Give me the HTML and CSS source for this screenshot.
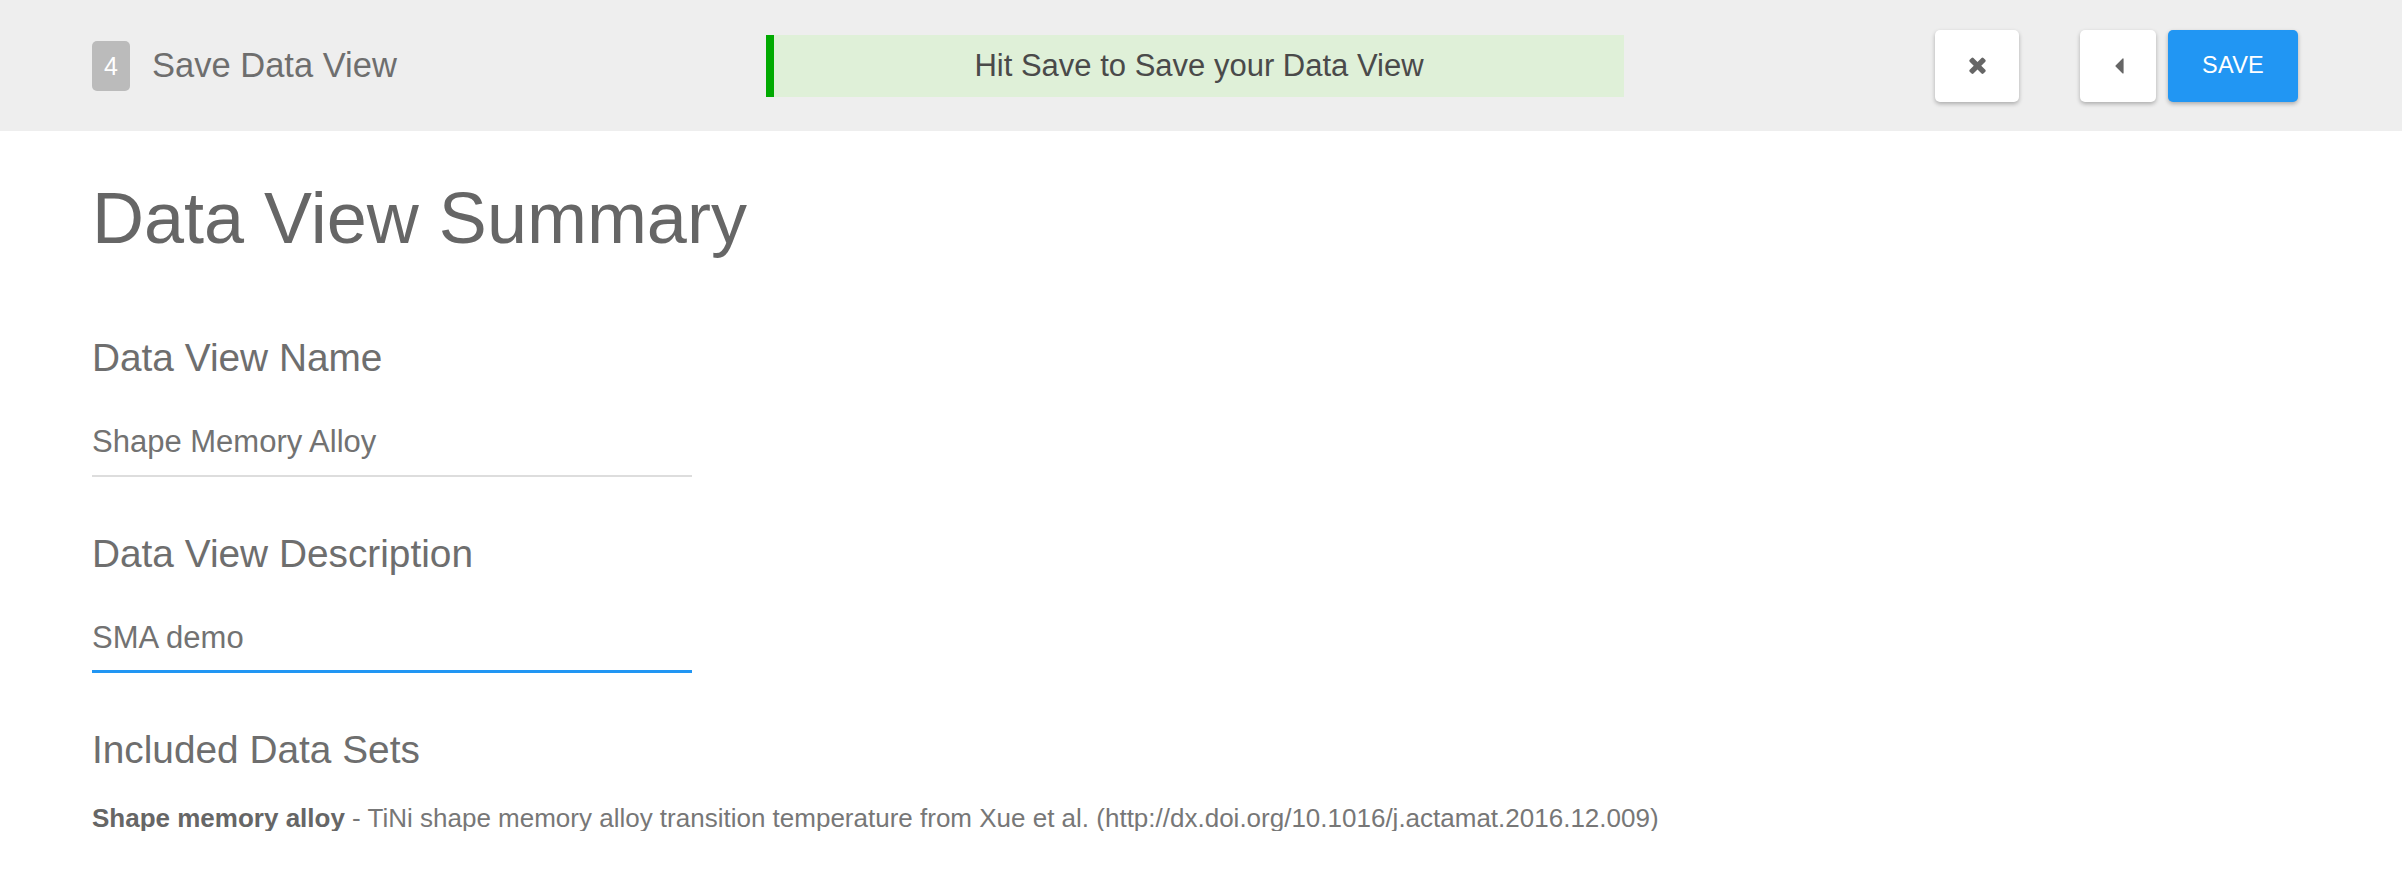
FILE: index.html
```html
<!DOCTYPE html>
<html lang="en">
<head>
<meta charset="utf-8">
<title>Save Data View</title>
<link rel="stylesheet" href="styles.css">
</head>
<body>
<header class="topbar">
  <div class="step">
    <span class="step-badge">4</span>
    <span class="step-title">Save Data View</span>
  </div>
  <div class="alert">Hit Save to Save your Data View</div>
  <div class="spacer"></div>
  <button class="btn btn-close" type="button" aria-label="Close">
    <svg class="icon-times" viewBox="302 322 1188 1232" width="17" height="17" aria-hidden="true"><path d="M1490 1322q0 40-28 68l-136 136q-28 28-68 28t-68-28l-294-294-294 294q-28 28-68 28t-68-28l-136-136q-28-28-28-68t28-68l294-294-294-294q-28-28-28-68t28-68l136-136q28-28 68-28t68 28l294 294 294-294q28-28 68-28t68 28l136 136q28 28 28 68t-28 68l-294 294 294 294q28 28 28 68z"/></svg>
  </button>
  <div class="btn-group">
    <button class="btn btn-back" type="button" aria-label="Back">
      <svg class="icon-caret" viewBox="0 0 9 16" width="9" height="16" aria-hidden="true"><polygon points="8,1 8,15 1,8"/></svg>
    </button>
    <button class="btn btn-save" type="button">SAVE</button>
  </div>
</header>

<main class="summary">
  <h1 class="summary-title">Data View Summary</h1>

  <section class="field">
    <h2 class="field-label">Data View Name</h2>
    <div class="field-input">Shape Memory Alloy</div>
  </section>

  <section class="field">
    <h2 class="field-label">Data View Description</h2>
    <div class="field-input field-input--focused">SMA demo</div>
  </section>

  <section class="field">
    <h2 class="field-label">Included Data Sets</h2>
    <p class="dataset"><strong>Shape memory alloy</strong> - TiNi shape memory alloy transition temperature from Xue et al. (http://dx.doi.org/10.1016/j.actamat.2016.12.009)</p>
  </section>
</main>
</body>
</html>
```

FILE: styles.css
```css
* {
  box-sizing: border-box;
}

html, body {
  margin: 0;
  padding: 0;
  background: #ffffff;
}

body {
  font-family: "Liberation Sans", Arial, Helvetica, sans-serif;
  color: #666666;
  overflow: hidden;
}

/* ---------- Top bar ---------- */
.topbar {
  height: 131px;
  background: #eeeeee;
  display: flex;
  align-items: center;
  padding: 0 104px 0 92px;
}

.step {
  flex: 0 0 674px;
  display: flex;
  align-items: center;
}

.step-badge {
  width: 38px;
  height: 50px;
  border-radius: 5px;
  background: #bbbbbb;
  color: #ffffff;
  font-size: 25px;
  line-height: 50px;
  text-align: center;
}

.step-title {
  margin-left: 22px;
  font-size: 34.5px;
  line-height: 1;
  color: #6e6e6e;
}

.alert {
  flex: 0 0 858px;
  height: 62px;
  background: #dff0d8;
  border-left: 8px solid #00aa00;
  color: #4a4a4a;
  font-size: 31px;
  line-height: 62px;
  text-align: center;
}

.spacer {
  flex: 1 1 auto;
}

.btn {
  height: 72px;
  border: none;
  border-radius: 5px;
  background: #ffffff;
  box-shadow: 0 2px 4px rgba(0, 0, 0, 0.28);
  display: flex;
  align-items: center;
  justify-content: center;
  padding: 0;
  font-family: inherit;
  cursor: pointer;
}

.btn-close {
  width: 84px;
}

.btn-group {
  display: flex;
  gap: 12px;
  margin-left: 61px;
}

.btn-back {
  width: 76px;
}

.btn-save {
  width: 130px;
  background: #2196f3;
  color: #ffffff;
  font-size: 23.5px;
  letter-spacing: 0.3px;
}

.icon-times path,
.icon-caret polygon {
  fill: #666666;
}

.icon-caret polygon {
  stroke: #666666;
  stroke-width: 1.2;
  stroke-linejoin: round;
}

.icon-caret {
  margin-left: 2px;
}

/* ---------- Summary ---------- */
.summary {
  padding: 0 92px;
}

.summary-title {
  margin: 51px 0 0;
  font-size: 72px;
  font-weight: normal;
  line-height: 1;
  color: #666666;
}

.field {
  margin: 0;
}

.field-label {
  margin: 58px 0 0;
  font-size: 38.8px;
  font-weight: normal;
  line-height: 1;
  color: #6e6e6e;
}

.summary-title + .field .field-label {
  margin-top: 85px;
}

.field-input {
  width: 600px;
  margin-top: 48px;
  padding-bottom: 18px;
  border-bottom: 2px solid #dddddd;
  font-size: 31px;
  line-height: 1;
  color: #727272;
}

.field-input--focused {
  padding-bottom: 17px;
  border-bottom: 3px solid #2196f3;
}

.dataset {
  margin: 36px 0 0;
  font-size: 26px;
  line-height: 1;
  color: #777777;
}

.dataset strong {
  font-weight: bold;
  color: #666666;
}
```
